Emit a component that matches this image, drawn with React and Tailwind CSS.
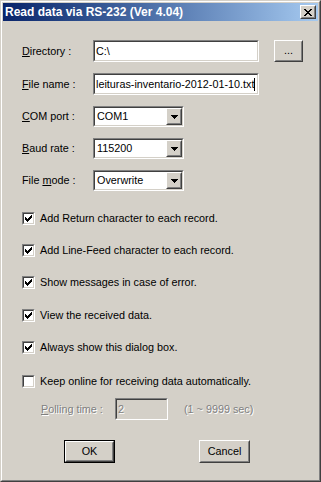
import React from "react";

const CHECK =
	"M6 0h1v1h-1z M5 1h2v1h-2z M0 2h1v1h-1z M4 2h3v1h-3z M0 3h2v1h-2z M3 3h3v1h-3z M0 4h5v1h-5z M1 5h3v1h-3z M2 6h1v1h-1z";
const CROSS =
	"M0 0h2v1h-2z M6 0h2v1h-2z M1 1h2v1h-2z M5 1h2v1h-2z M2 2h4v1h-4z M3 3h2v1h-2z M2 4h4v1h-4z M1 5h2v1h-2z M5 5h2v1h-2z M0 6h2v1h-2z M6 6h2v1h-2z";
const ARROW = "M0 0h7v1h-7z M1 1h5v1h-5z M2 2h3v1h-3z M3 3h1v1h-1z";

function Sunken({ className = "", inner = "bg-white", children }) {
	return (
		<div
			className={`border border-t-[#808080] border-l-[#808080] border-r-white border-b-white ${className}`}
		>
			<div
				className={`h-full border border-t-[#404040] border-l-[#404040] border-r-[#d4d0c8] border-b-[#d4d0c8] ${inner}`}
			>
				{children}
			</div>
		</div>
	);
}

function Raised({ className = "", children }) {
	return (
		<div
			className={`border border-t-white border-l-white border-r-[#404040] border-b-[#404040] bg-[#d4d0c8] ${className}`}
		>
			<div className="h-full border border-t-[#d4d0c8] border-l-[#d4d0c8] border-r-[#808080] border-b-[#808080] flex items-center justify-center">
				{children}
			</div>
		</div>
	);
}

function Label({ pre = "", u, post }) {
	return (
		<div className="w-[71px] shrink-0">
			{pre}
			<span className="underline underline-offset-1">{u}</span>
			{post}
		</div>
	);
}

function Combo({ value }) {
	return (
		<Sunken className="w-[91px] h-[21px]">
			<div className="h-full flex items-center">
				<div className="flex-1 pl-[2px]">{value}</div>
				<Raised className="w-[16px] h-full">
					<svg width="7" height="4" viewBox="0 0 7 4" shapeRendering="crispEdges">
						<path d={ARROW} fill="#000" />
					</svg>
				</Raised>
			</div>
		</Sunken>
	);
}

function Check({ checked, label }) {
	return (
		<div className="flex items-center h-[13px] pl-[19px]">
			<Sunken className="w-[13px] h-[13px] shrink-0">
				<div className="h-full flex items-center justify-center">
					{checked && (
						<svg width="7" height="7" viewBox="0 0 7 7" shapeRendering="crispEdges">
							<path d={CHECK} fill="#000" />
						</svg>
					)}
				</div>
			</Sunken>
			<span className="ml-[5px]">{label}</span>
		</div>
	);
}

export default function App() {
	const dim = "text-[#808080] [text-shadow:1px_1px_0_#fff]";
	return (
		<div className="w-[321px] h-[482px] bg-[#d4d0c8] border border-t-[#d4d0c8] border-l-[#d4d0c8] border-r-[#404040] border-b-[#404040] font-['Liberation_Sans',Arial,sans-serif] text-[10.8px] leading-none text-black select-none">
			<div className="h-full border border-t-white border-l-white border-r-[#808080] border-b-[#808080] p-px flex flex-col">
				{/* title bar */}
				<div className="h-[18px] flex items-center bg-linear-to-r from-[#0a246a] to-[#a6caf0] pl-[2px] pr-[2px]">
					<span className="flex-1 text-white font-bold text-[12px]">
						Read data via RS-232 (Ver 4.04)
					</span>
					<Raised className="w-[16px] h-[14px]">
						<svg width="8" height="7" viewBox="0 0 8 7" shapeRendering="crispEdges">
							<path d={CROSS} fill="#000" />
						</svg>
					</Raised>
				</div>

				<div className="flex flex-col pl-[19px] mt-[19px]">
					<div className="flex items-center h-[22px]">
						<Label u="D" post="irectory :" />
						<Sunken className="w-[166px] h-[22px]">
							<div className="h-full flex items-center pl-px">C:\</div>
						</Sunken>
						<Raised className="w-[29px] h-[22px] ml-[15px]">
							<span className="-mt-[2px]">...</span>
						</Raised>
					</div>
					<div className="flex items-center h-[22px] mt-[11px]">
						<Label u="F" post="ile name :" />
						<Sunken className="w-[166px] h-[22px]">
							<div className="h-full flex items-center pl-px whitespace-nowrap overflow-hidden">
								leituras-inventario-2012-01-10.txt
								<span className="inline-block w-px h-[13px] bg-black" />
							</div>
						</Sunken>
					</div>
					<div className="flex items-center h-[21px] mt-[11px]">
						<Label u="C" post="OM port :" />
						<Combo value="COM1" />
					</div>
					<div className="flex items-center h-[21px] mt-[11px]">
						<Label u="B" post="aud rate :" />
						<Combo value="115200" />
					</div>
					<div className="flex items-center h-[21px] mt-[11px]">
						<Label pre="File " u="m" post="ode :" />
						<Combo value="Overwrite" />
					</div>
				</div>

				<div className="flex flex-col mt-[21px]">
					<Check checked label="Add Return character to each record." />
					<div className="mt-[19px]">
						<Check checked label="Add Line-Feed character to each record." />
					</div>
					<div className="mt-[19px]">
						<Check checked label="Show messages in case of error." />
					</div>
					<div className="mt-[20px]">
						<Check checked label="View the received data." />
					</div>
					<div className="mt-[19px]">
						<Check checked label="Always show this dialog box." />
					</div>
					<div className="mt-[21px]">
						<Check label="Keep online for receiving data automatically." />
					</div>
				</div>

				<div className="flex items-center h-[22px] mt-[10px] pl-[38px]">
					<div className={`w-[74px] ${dim}`}>
						<span className="underline underline-offset-1">P</span>olling time :
					</div>
					<Sunken className="w-[53px] h-[22px]" inner="bg-[#d4d0c8]">
						<div className={`h-full flex items-center pl-px ${dim}`}>2</div>
					</Sunken>
					<span className={`ml-[16px] ${dim}`}>(1 ~ 9999 sec)</span>
				</div>

				<div className="flex mt-[20px] pl-[61px]">
					<div className="w-[51px] h-[23px] border border-black">
						<Raised className="h-full">OK</Raised>
					</div>
					<Raised className="w-[51px] h-[23px] ml-[84px]">Cancel</Raised>
				</div>
			</div>
		</div>
	);
}
